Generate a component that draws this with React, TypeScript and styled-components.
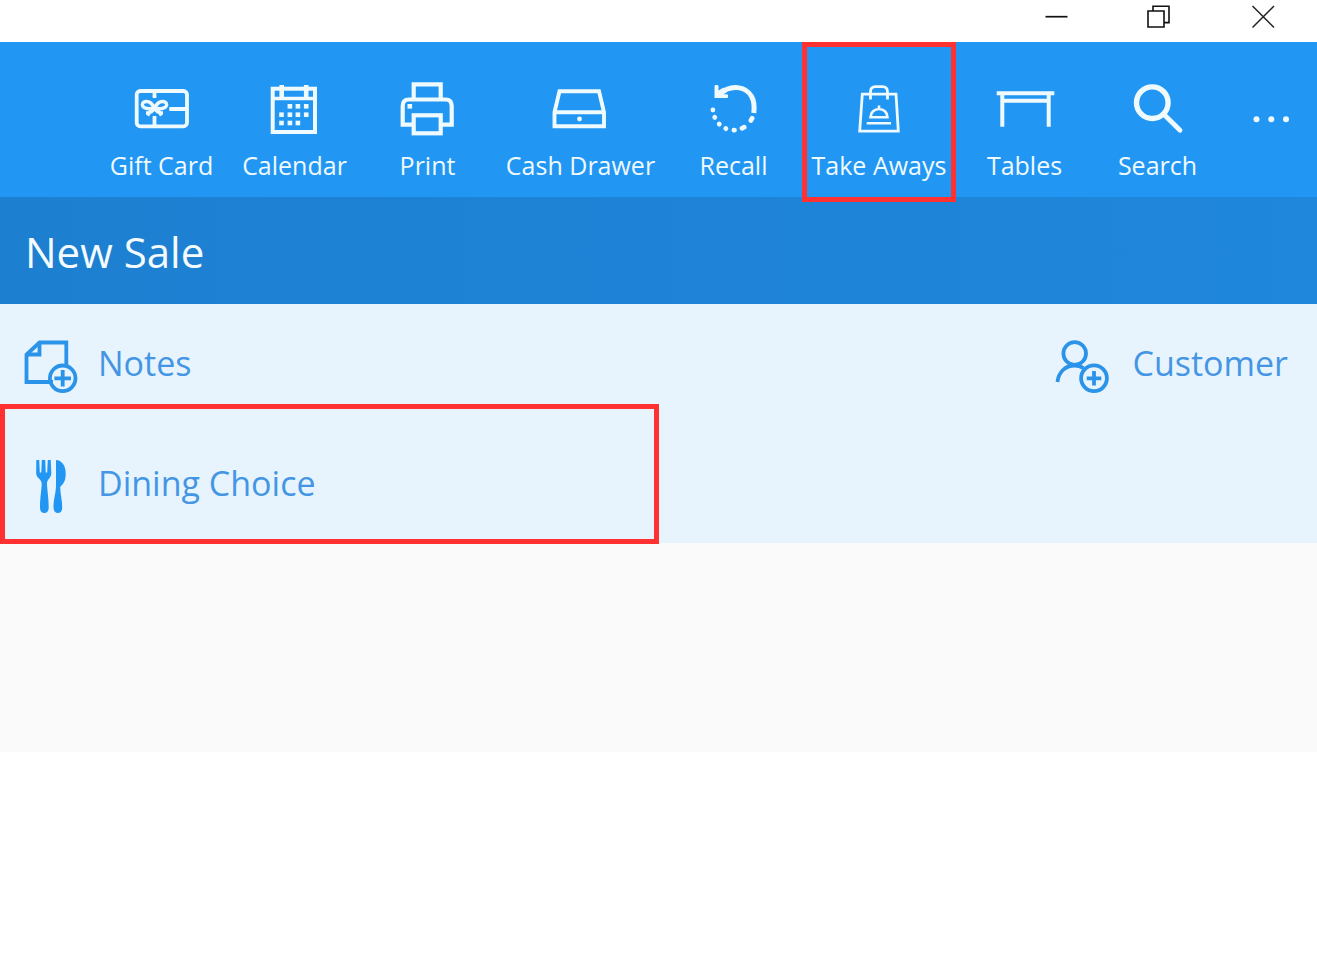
import React from "react";
import styled, { createGlobalStyle } from "styled-components";

const GlobalStyle = createGlobalStyle`
  *, *::before, *::after { box-sizing: border-box; }
  body {
    margin: 0;
    background: #ffffff;
    font-family: "Open Sans", "Noto Sans", sans-serif;
  }
  button { font-family: inherit; border: 0; background: none; padding: 0; margin: 0; cursor: pointer; }
  svg { display: block; overflow: visible; }
`;

const HIGHLIGHT = "#ff3131";

const TitleBar = styled.header`
  display: flex;
  justify-content: flex-end;
  height: 42px;
  padding-right: 3px;
`;

const WindowButton = styled.button`
  display: flex;
  align-items: center;
  justify-content: center;
  width: 103px;
  height: 33px;
`;

const Toolbar = styled.nav`
  display: flex;
  justify-content: flex-end;
  height: 155px;
  background: #2196f3;
  color: #effaff;
`;

const widths = { narrow: 93, regular: 133, wide: 158, widest: 173 };

const ToolButton = styled.button<{ $size?: keyof typeof widths; $marked?: boolean }>`
  position: relative;
  display: flex;
  flex-direction: column;
  align-items: center;
  gap: 11px;
  flex: none;
  width: ${(p) => widths[p.$size ?? "regular"]}px;
  padding-top: 36px;
  color: inherit;

  &::after {
    content: ${(p) => (p.$marked ? '""' : "none")};
    position: absolute;
    inset: 0 2px -5px;
    border: 5px solid ${HIGHLIGHT};
  }
`;

const ToolLabel = styled.span`
  font-size: 25px;
  line-height: 32px;
  white-space: nowrap;
`;

const SaleBar = styled.div`
  display: flex;
  align-items: center;
  height: 107px;
  padding: 2px 25px 0;
  background: linear-gradient(to right, #1d7fd0, #1f87dc);
`;

const SaleTitle = styled.h1`
  margin: 0;
  color: #f4fbff;
  font-size: 42px;
  font-weight: 400;
  line-height: 56px;
`;

const Options = styled.section`
  display: grid;
  grid-template-columns: 1fr 1fr;
  grid-auto-rows: 120px;
  height: 239px;
  background: #e7f4fe;
`;

const OptionCell = styled.div<{ $end?: boolean; $marked?: boolean }>`
  position: relative;
  display: flex;
  align-items: center;
  justify-content: ${(p) => (p.$end ? "flex-end" : "flex-start")};
  padding: 0 29px 0 20px;

  &::after {
    content: ${(p) => (p.$marked ? '""' : "none")};
    position: absolute;
    inset: -20px 0 0;
    border: 5px solid ${HIGHLIGHT};
    pointer-events: none;
  }
`;

const OptionButton = styled.button`
  display: flex;
  align-items: center;
  gap: 20px;
  color: #2b93e8;
`;

const OptionLabel = styled.span`
  padding-bottom: 2px;
  color: #4496e4;
  font-size: 34px;
  line-height: 48px;
  white-space: nowrap;
`;

const ItemList = styled.main`
  height: 209px;
  background: #fafafa;
`;

const ToolIcon = ({ children }: { children: React.ReactNode }) => (
  <svg width="60" height="60" viewBox="0 0 60 60" fill="none" stroke="currentColor" aria-hidden="true">
    {children}
  </svg>
);

const OptionIcon = ({ children }: { children: React.ReactNode }) => (
  <svg width="58" height="60" viewBox="0 0 58 60" fill="none" stroke="currentColor" strokeWidth="3.8" aria-hidden="true">
    {children}
  </svg>
);

const GiftIcon = () => (
  <ToolIcon>
    <g strokeWidth="3.8">
      <rect x="4.7" y="13" width="50.3" height="35.3" rx="3.5" />
      <path d="M22.500 13v7M22.500 38v10M37.300 31H55" />
    </g>
    <g strokeWidth="3.400">
      <path d="M22.500 30c-2-4-5-6.500-8-6.500-4 0-5 3-3.500 5 1.500 2 6.500 2.500 11.500 1.500zM22.500 30c2-4 5-6.500 8-6.500 4 0 5 3 3.500 5-1.500 2-6.500 2.500-11.500 1.500z" />
      <path d="M22 30.500c-1 3-3 4.500-8 4.500M23 30.500c1 3 3 4.500 8 4.500M19 32l-3.500 5.500M26 32l3.500 5.500" />
    </g>
  </ToolIcon>
);

const CalendarIcon = () => (
  <ToolIcon>
    <rect x="7.700" y="10.700" width="42.300" height="43.300" strokeWidth="4" />
    <path d="M7 20.500h43" strokeWidth="3.400" />
    <path d="M16.700 7v13M41.200 7v13" strokeWidth="4.600" />
    <g fill="currentColor" stroke="none">
      {[
        [24.9, 28.3], [32.9, 28.3], [41.2, 28.3],
        [16.5, 36.7], [24.9, 36.7], [32.9, 36.7], [41.2, 36.7],
        [16.5, 45], [24.9, 45], [32.9, 45],
      ].map(([x, y]) => (
        <rect key={`${x}-${y}`} x={x - 2.3} y={y - 2.3} width="4.6" height="4.6" />
      ))}
    </g>
  </ToolIcon>
);

const PrintIcon = () => (
  <ToolIcon>
    <g strokeWidth="4.200">
      <path d="M15.700 21V6.300h27V21" />
      <path d="M15.700 46.700h-11V28c0-4 2-6.500 6-6.500h37c4 0 6 2.500 6 6.500v18.700h-11" />
      <rect x="15.700" y="37.300" width="27" height="18" />
    </g>
    <rect x="9.500" y="26" width="4.600" height="4.600" fill="currentColor" stroke="none" />
  </ToolIcon>
);

const DrawerIcon = () => (
  <ToolIcon>
    <path d="M8.500 13.200h39.500l5 21V48.200H3.500V34.200zM3.500 34.200h49.500" strokeWidth="3.900" />
    <circle cx="28.500" cy="41" r="2.400" fill="currentColor" stroke="none" />
  </ToolIcon>
);

const RecallIcon = () => (
  <ToolIcon>
    <path d="M15 16.500C27 5.500 42 8.500 47.600 18.500c2.500 4.500 3 10 2.200 16.500" strokeWidth="5" />
    <path d="M10.500 8c0-1.500 4-1.500 4 0v4.500l5-3 3.500 4.500-3.500 2.200h3.500c1.500 0 1.500 3.800 0 3.800H10.500z" fill="currentColor" stroke="none" />
    <g strokeWidth="4.800" strokeLinecap="round">
      <path d="M8.900 32v.1M10.700 39.300l.1.100M15.200 46l.1.100M21.800 50.500l.1.100M29.900 52.200h.6M38 50.300l2.200-1.100M46.800 42.500l1.400-2.300" />
    </g>
  </ToolIcon>
);

const BagIcon = () => (
  <ToolIcon>
    <path d="M13.300 16.200h33.700l2.300 37H10.700z" strokeWidth="2.800" />
    <path d="M21.500 21.500V14c0-3.500 2-5.300 5-5.300h7c3 0 5 1.800 5 5.300v7.500" strokeWidth="2.800" />
    <path d="M21.500 39.200h17c0-5-4-8.200-8.500-8.200s-8.500 3.200-8.500 8.200zM30 27.500V31M17.700 45.300H42" strokeWidth="2.600" />
  </ToolIcon>
);

const TableIcon = () => (
  <ToolIcon>
    <path d="M1.700 15.200h57.600M7.300 22.700h46.400M7.300 15v33.700M53.700 15v33.700" strokeWidth="4" />
  </ToolIcon>
);

const SearchIcon = () => (
  <ToolIcon>
    <circle cx="24.300" cy="24.700" r="15.800" strokeWidth="5.400" />
    <path d="M36 36.500l16 15.700" strokeWidth="4.800" strokeLinecap="round" />
  </ToolIcon>
);

const MoreIcon = () => (
  <ToolIcon>
    <g fill="currentColor" stroke="none">
      <circle cx="15.500" cy="41.300" r="3" />
      <circle cx="30.300" cy="41.300" r="3" />
      <circle cx="45" cy="41.300" r="3" />
    </g>
  </ToolIcon>
);

const tools: { label: string; icon: React.ReactNode; size?: keyof typeof widths; marked?: boolean }[] = [
  { label: "Gift Card", icon: <GiftIcon /> },
  { label: "Calendar", icon: <CalendarIcon /> },
  { label: "Print", icon: <PrintIcon /> },
  { label: "Cash Drawer", icon: <DrawerIcon />, size: "widest" },
  { label: "Recall", icon: <RecallIcon /> },
  { label: "Take Aways", icon: <BagIcon />, size: "wide", marked: true },
  { label: "Tables", icon: <TableIcon /> },
  { label: "Search", icon: <SearchIcon /> },
];

export default function App() {
  return (
    <>
      <GlobalStyle />
      <TitleBar>
        <WindowButton aria-label="Minimize">
          <svg width="24" height="24" viewBox="0 0 24 24" stroke="#111" strokeWidth="1.700">
            <path d="M.5 11.700h22" />
          </svg>
        </WindowButton>
        <WindowButton aria-label="Restore">
          <svg width="24" height="24" viewBox="0 0 24 24" fill="none" stroke="#111" strokeWidth="1.600">
            <path d="M0 6h16v16H0zM5 6V1.300h16v16.300h-4.500" />
          </svg>
        </WindowButton>
        <WindowButton aria-label="Close">
          <svg width="24" height="24" viewBox="0 0 24 24" stroke="#222" strokeWidth="1.500">
            <path d="M1.500 1l21.500 21.500M23 1L1.500 22.500" />
          </svg>
        </WindowButton>
      </TitleBar>
      <Toolbar aria-label="Sale tools">
        {tools.map((t) => (
          <ToolButton key={t.label} $size={t.size} $marked={t.marked}>
            {t.icon}
            <ToolLabel>{t.label}</ToolLabel>
          </ToolButton>
        ))}
        <ToolButton $size="narrow" aria-label="More">
          <MoreIcon />
        </ToolButton>
      </Toolbar>
      <SaleBar>
        <SaleTitle>New Sale</SaleTitle>
      </SaleBar>
      <Options>
        <OptionCell>
          <OptionButton>
            <OptionIcon>
              <path d="M33 48H6.500V20.500L19.500 8.500H46.300V31" />
              <path d="M7 20.500H19.500V8.500" />
              <circle cx="42.700" cy="44.300" r="12.800" />
              <path d="M42.700 36v16.600M34.400 44.300h16.600" />
            </OptionIcon>
            <OptionLabel>Notes</OptionLabel>
          </OptionButton>
        </OptionCell>
        <OptionCell $end>
          <OptionButton>
            <OptionIcon>
              <circle cx="20.700" cy="19.500" r="11.300" />
              <path d="M3.500 48C4.500 38 11.500 31.500 20.500 31.500c3.500 0 6.500 1 9 2.500" />
              <circle cx="40" cy="44.300" r="12.900" />
              <path d="M40 37v14.600M32.700 44.300h14.600" />
            </OptionIcon>
            <OptionLabel>Customer</OptionLabel>
          </OptionButton>
        </OptionCell>
        <OptionCell $marked>
          <OptionButton>
            <OptionIcon>
              <g fill="#2196f3" stroke="none">
                <path d="M16.300 6h2.900l.6 12.500h1.500L21.800 6h3.400l.5 12.500H27.200L27.800 6h2.900l.6 13c.2 5-4.300 6-4.300 10.500 0 6 1.700 13 1.700 24 0 3.500-1.700 5.500-4.400 5.500s-4.300-2-4.300-5.500c0-11 1.700-18 1.700-24 0-4.500-5.700-5.500-5.500-10.500z" />
                <path d="M36 6c5.500.5 9.700 5 9.700 13 0 7.500-1.500 10-5.500 14 0 7 2 13 2 20.500 0 3.500-1.500 5.500-4.200 5.500s-4.500-2-4.500-5.500c0-9 2.500-15 2.500-22z" />
              </g>
            </OptionIcon>
            <OptionLabel>Dining Choice</OptionLabel>
          </OptionButton>
        </OptionCell>
      </Options>
      <ItemList />
    </>
  );
}
